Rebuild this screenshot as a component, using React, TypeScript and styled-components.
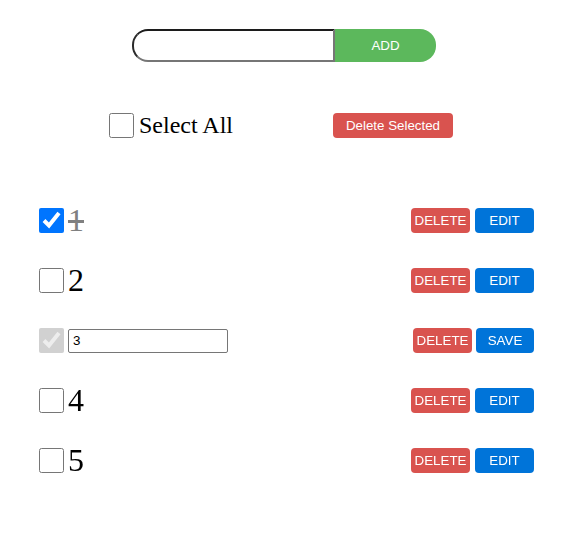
import React from "react";
import styled, { createGlobalStyle } from "styled-components";

const Global = createGlobalStyle`
  html, body { margin: 0; padding: 0; background: #fff; }
  body { font-family: "Liberation Serif", "Times New Roman", serif; }
`;

const Page = styled.div`
  width: 577px;
  min-height: 535px;
  box-sizing: border-box;
  padding: 29px 43px 0 39px;
  display: flex;
  flex-direction: column;
`;

const AddForm = styled.form`
  display: flex;
  align-self: flex-start;
  margin-left: 93px;
  height: 33px;
`;

const AddInput = styled.input`
  box-sizing: border-box;
  width: 203px;
  height: 33px;
  margin: 0;
  padding: 0 12px;
  border-style: solid;
  border-width: 2px;
  border-color: #1c1c1c #767676 #767676 #2a2a2a;
  border-radius: 16px 0 0 16px;
  outline: none;
  font: 13.333px "Liberation Sans", Arial, sans-serif;
`;

const AddButton = styled.button`
  width: 101px;
  height: 33px;
  margin: 0;
  border: none;
  border-radius: 0 16px 16px 0;
  background: #5cb85c;
  color: #fff;
  font: 13.333px "Liberation Sans", Arial, sans-serif;
  cursor: pointer;
`;

const SelectBar = styled.div`
  display: flex;
  align-items: center;
  margin: 51px 0 0 70px;
  height: 25px;
  gap: 100px;
`;

const CheckLabel = styled.label<{ $size: number }>`
  display: flex;
  align-items: center;
  font-size: ${(p) => p.$size}px;
  color: #000;
`;

const Check = styled.input.attrs({ type: "checkbox" })<{ $gap: number }>`
  width: 25px;
  height: 25px;
  margin: 0 ${(p) => p.$gap}px 0 0;
  flex: none;
`;

const Button = styled.button<{ $color: string; $w: number }>`
  width: ${(p) => p.$w}px;
  height: 25px;
  margin: 0;
  padding: 0;
  border: none;
  border-radius: 4px;
  background: ${(p) => p.$color};
  color: #fff;
  font: 13.333px "Liberation Sans", Arial, sans-serif;
  white-space: nowrap;
  cursor: pointer;
`;

const List = styled.ul`
  list-style: none;
  margin: 70px 0 0;
  padding: 0;
  display: flex;
  flex-direction: column;
  gap: 35px;
`;

const Row = styled.li`
  height: 25px;
  display: flex;
  align-items: center;
  justify-content: space-between;
`;

const ItemText = styled.span<{ $done: boolean }>`
  font-size: 32px;
  color: ${(p) => (p.$done ? "#808080" : "#000")};
  text-decoration: ${(p) => (p.$done ? "line-through" : "none")};
`;

const EditInput = styled.input`
  box-sizing: border-box;
  width: 160px;
  height: 24px;
  margin: 0;
  padding: 0 4px;
  border: 1px solid #767676;
  border-radius: 2px;
  outline: none;
  font: 13.333px "Liberation Sans", Arial, sans-serif;
  color: #000;
  caret-color: #000;
`;

const Actions = styled.div<{ $gap: number }>`
  display: flex;
  gap: ${(p) => p.$gap}px;
`;

type Item = { id: number; text: string; done: boolean; editing?: boolean };

const items: Item[] = [
  { id: 1, text: "1", done: true },
  { id: 2, text: "2", done: false },
  { id: 3, text: "3", done: true, editing: true },
  { id: 4, text: "4", done: false },
  { id: 5, text: "5", done: false },
];

export default function App() {
  return (
    <>
      <Global />
      <Page>
        <AddForm onSubmit={(e) => e.preventDefault()}>
          <AddInput type="text" />
          <AddButton type="submit">ADD</AddButton>
        </AddForm>
        <SelectBar>
          <CheckLabel $size={24}>
            <Check $gap={5} />
            Select All
          </CheckLabel>
          <Button $color="#d9534f" $w={120}>Delete Selected</Button>
        </SelectBar>
        <List>
          {items.map((it) => (
            <Row key={it.id}>
              <CheckLabel $size={32}>
                <Check $gap={4} defaultChecked={it.done} disabled={it.editing} />
                {it.editing ? (
                  <EditInput defaultValue={it.text} autoFocus />
                ) : (
                  <ItemText $done={it.done}>{it.text}</ItemText>
                )}
              </CheckLabel>
              <Actions $gap={it.editing ? 4 : 5}>
                <Button $color="#d9534f" $w={59}>DELETE</Button>
                <Button $color="#0074d9" $w={it.editing ? 58 : 59}>
                  {it.editing ? "SAVE" : "EDIT"}
                </Button>
              </Actions>
            </Row>
          ))}
        </List>
      </Page>
    </>
  );
}
